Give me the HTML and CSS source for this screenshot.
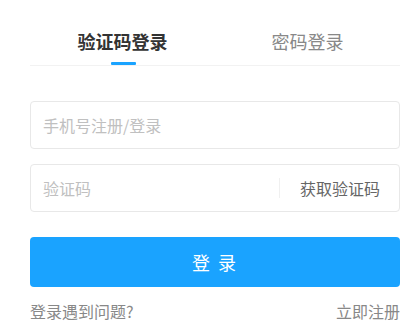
FILE: index.html
```html
<!DOCTYPE html>
<html lang="zh">
<head>
<meta charset="utf-8">
<link rel="stylesheet" href="styles.css">
</head>
<body>
<div class="login">
  <div class="tabs">
    <div class="tab active">验证码登录</div>
    <div class="tab">密码登录</div>
  </div>
  <div class="field field-phone">
    <input class="input" type="text" placeholder="手机号注册/登录">
  </div>
  <div class="field field-code">
    <input class="input" type="text" placeholder="验证码">
    <span class="divider"></span>
    <span class="get-code">获取验证码</span>
  </div>
  <button class="submit">登 录</button>
  <div class="links">
    <span class="link">登录遇到问题?</span>
    <span class="link">立即注册</span>
  </div>
</div>
</body>
</html>
```
FILE: styles.css
```css
* { box-sizing: border-box; }
html, body { margin: 0; padding: 0; background: #fff; }
body {
  font-family: "Noto Sans CJK SC", "Noto Sans", sans-serif;
}
.login {
  width: 370px;
  margin-left: 30px;
  padding-top: 24px;
}
.tabs {
  display: flex;
  border-bottom: 1px solid #f2f2f2;
}
.tab {
  position: relative;
  flex: 1;
  text-align: center;
  font-size: 18px;
  line-height: 26px;
  height: 41px;
  padding-top: 4px;
  color: #888;
}
.tab.active {
  color: #333;
  font-weight: 700;
}
.tab.active::after {
  content: "";
  position: absolute;
  left: 50%;
  bottom: 0;
  width: 25px;
  height: 3px;
  margin-left: -12px;
  background: #1aa3ff;
  border-radius: 1px;
}
.field {
  display: flex;
  align-items: center;
  height: 48px;
  border: 1px solid #e8e8e8;
  border-radius: 4px;
  padding: 0 12px;
}
.field-phone { margin-top: 35px; }
.field-code { margin-top: 15px; padding-right: 19px; }
.input {
  flex: 1;
  min-width: 0;
  border: 0;
  outline: 0;
  padding: 0;
  font-family: inherit;
  font-size: 16px;
  color: #333;
  background: transparent;
}
.input::placeholder { color: #c0c0c0; }
.divider {
  width: 1px;
  height: 20px;
  background: #f0f0f0;
  margin-right: 20px;
}
.get-code {
  font-size: 16px;
  color: #666;
  line-height: 22px;
}
.submit {
  display: block;
  width: 100%;
  height: 50px;
  margin-top: 25px;
  border: 0;
  border-radius: 4px;
  background: #1aa3ff;
  color: #fff;
  font-family: inherit;
  font-size: 18px;
  letter-spacing: 2px;
  padding: 0;
}
.links {
  display: flex;
  justify-content: space-between;
  margin-top: 13px;
  font-size: 16px;
  line-height: 22px;
  color: #888;
}
```
